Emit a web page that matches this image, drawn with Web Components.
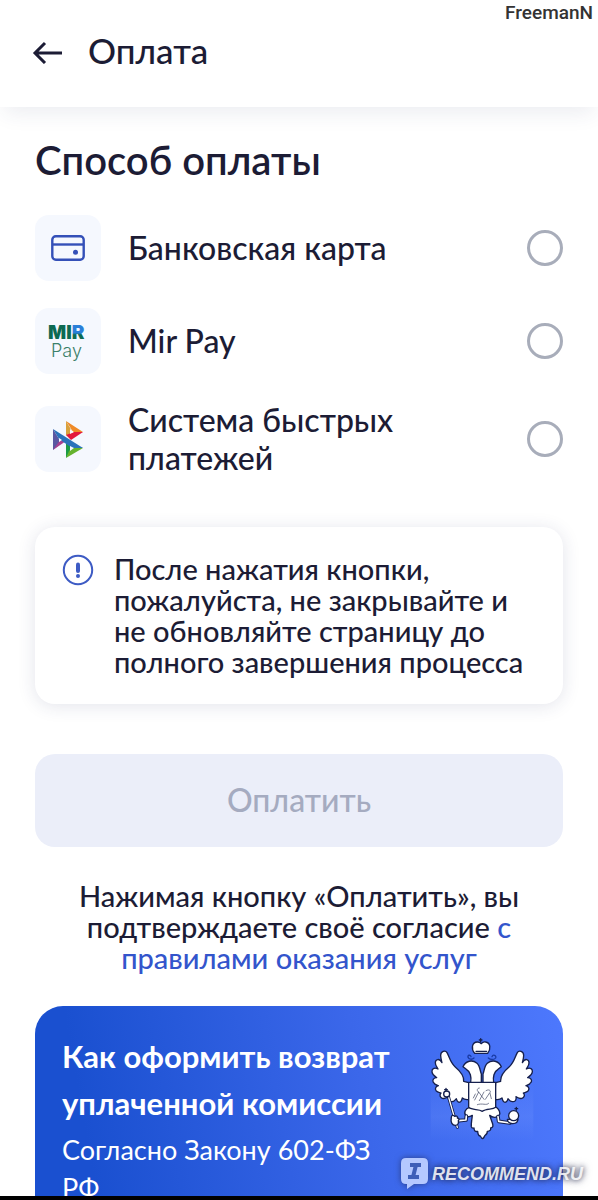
<!DOCTYPE html>
<html lang="ru">
<head>
<meta charset="utf-8">
<meta name="viewport" content="width=device-width, initial-scale=1">
<title>Оплата</title>
<style>
body {
    margin: 0;
    background-color: #fff;
    font-family: Lato, "Open Sans", sans-serif;
    font-weight: 500;
    color: #1c1c35;
    --accent: #3450b8;
    --tile: #f5f8fe;
    --muted: #a8adba;
}
</style>
</head>
<body>

<pay-screen>
    <screen-header slot="header">Оплата</screen-header>

    <payment-methods>
        <span slot="title">Способ оплаты</span>
        <payment-option value="card">
            <card-icon slot="icon"></card-icon>
            Банковская карта
        </payment-option>
        <payment-option value="mir">
            <mir-icon slot="icon"></mir-icon>
            Mir Pay
        </payment-option>
        <payment-option value="sbp">
            <sbp-icon slot="icon"></sbp-icon>
            Система быстрых платежей
        </payment-option>
    </payment-methods>

    <info-notice>После нажатия кнопки, пожалуйста, не закрывайте и не обновляйте страницу до полного завершения процесса</info-notice>

    <pay-form>Оплатить</pay-form>

    <refund-banner>
        <span slot="title">Как оформить возврат уплаченной комиссии</span>
        Согласно Закону 602-ФЗ РФ
    </refund-banner>

    <user-mark slot="overlay">FreemanN</user-mark>
    <site-mark slot="overlay">RECOMMEND.RU</site-mark>
</pay-screen>

<script>
function define(name, html, setup) {
    const template = document.createElement('template')
    template.innerHTML = html

    customElements.define(name, class extends HTMLElement {
        constructor() {
            super()
            const shadow = this.attachShadow({ mode: 'open' })
            shadow.appendChild(template.content.cloneNode(true))
            if (setup) setup(this, shadow)
        }
    })
}

define('pay-screen', `
<style>
:host {
    display: flex;
    flex-direction: column;
    position: relative;
    height: 100vh;
    overflow: hidden;
}

main {
    flex: 1;
    min-height: 0;
    overflow: hidden;
    padding: 29px 35px 0;
}

footer {
    flex: none;
    height: 4px;
    background-color: #000;
}
</style>

<slot name="header"></slot>
<main><slot></slot></main>
<footer></footer>
<slot name="overlay"></slot>`)

define('screen-header', `
<style>
:host {
    display: block;
    flex: none;
    position: relative;
    background-color: #fff;
    box-shadow: 0 10px 20px -4px rgba(40, 50, 100, .09);
}

header {
    display: flex;
    align-items: center;
    gap: 25px;
    padding: 29px 32px 36px;
}

button {
    display: flex;
    padding: 0;
    border: none;
    background: none;
    color: inherit;
    cursor: pointer;
}

h1 {
    margin: 0;
    font-size: 35px;
    line-height: 42px;
    font-weight: 500;
}
</style>

<header>
    <button type="button" aria-label="Назад">
        <svg width="31" height="28" viewBox="0 0 31 28" fill="none" stroke="currentColor" stroke-width="3">
            <path d="M30 17H3M13 7 3 17l10 10"/>
        </svg>
    </button>
    <h1><slot></slot></h1>
</header>`)

define('payment-methods', `
<style>
:host {
    display: block;
}

h2 {
    margin: 0 0 31px;
    font-size: 40px;
    line-height: 48px;
    font-weight: 600;
}

div {
    display: flex;
    flex-direction: column;
    gap: 27px;
}
</style>

<h2><slot name="title"></slot></h2>
<div role="radiogroup" aria-label="Способ оплаты"><slot></slot></div>`,
(host) => {
    // radios in separate shadow roots don't form a group on their own
    host.addEventListener('option-selected', (event) => {
        host.querySelectorAll('payment-option').forEach(el => {
            if (el !== event.target) el.shadowRoot.querySelector('input').checked = false
        })
    })
})

define('payment-option', `
<style>
:host {
    display: block;
}

label {
    display: flex;
    align-items: center;
    gap: 27px;
    font-size: 32px;
    line-height: 38px;
    cursor: pointer;
}

.icon {
    flex: none;
    display: flex;
    align-items: center;
    justify-content: center;
    width: 66px;
    height: 66px;
    border-radius: 14px;
    background-color: var(--tile);
}

.text {
    flex: 1;
}

input {
    appearance: none;
    flex: none;
    width: 36px;
    height: 36px;
    margin: 0;
    border: 3px solid var(--muted);
    border-radius: 50%;
    cursor: pointer;
}

input:checked {
    border: 10px solid var(--accent);
}
</style>

<label>
    <span class="icon"><slot name="icon"></slot></span>
    <span class="text"><slot></slot></span>
    <input type="radio">
</label>`,
(host, shadow) => {
    shadow.querySelector('input').addEventListener('change', () => {
        host.dispatchEvent(new CustomEvent('option-selected', { bubbles: true }))
    })
})

define('card-icon', `
<style>
:host {
    display: flex;
    color: var(--accent);
}
</style>

<svg width="34" height="26" viewBox="0 0 34 26" fill="none" stroke="currentColor" stroke-width="2.4">
    <rect x="1.3" y="1.3" width="31.4" height="23.4" rx="3.5"/>
    <path d="M1.3 9.5h31.4"/>
    <circle cx="24.5" cy="17.2" r="2.5" fill="currentColor" stroke="none"/>
</svg>`)

define('mir-icon', `
<style>
:host {
    display: flex;
}

text {
    font-family: Inter, sans-serif;
}
</style>

<svg width="42" height="40" viewBox="0 0 42 40">
    <defs>
        <linearGradient id="r" x1="0" y1="0" x2="0" y2="1">
            <stop offset=".52" stop-color="#2a7fd8"/>
            <stop offset=".6" stop-color="#0d6a52"/>
        </linearGradient>
    </defs>
    <text x="1" y="18" font-size="19" font-weight="900" fill="#0d6a52">MI<tspan fill="url(#r)">R</tspan></text>
    <text x="4" y="36" font-size="18" font-weight="300" fill="#3b8069">Pay</text>
</svg>`)

define('sbp-icon', `
<style>
:host {
    display: flex;
}
</style>

<svg width="32" height="38" viewBox="0 0 32 38">
    <path fill="#5b57a2" d="M1 9l6 10v6L1 30z"/>
    <path fill="#d9a13c" d="M14 1l6 10v8l-6-4z"/>
    <path fill="#ef8a27" d="M14 1l17 11-9 2-4-7z"/>
    <path fill="#e3183c" d="M31 12L19 20l-5-5 8-3z"/>
    <path fill="#a8418f" d="M1 30l13-9-5-2-3 4z"/>
    <path fill="#1b9b45" d="M14 38V20l4 3v9z"/>
    <path fill="#65b32e" d="M14 38l17-10-8-3-6 6z"/>
    <path fill="#2a72ba" d="M1 9l30 19H20L7 19z"/>
    <path fill="#f5f8fe" d="M7 18l3 2-3 2zM18 9l4 3-4 2zM18 26l4 2-4 3z"/>
</svg>`)

define('info-notice', `
<style>
:host {
    display: flex;
    gap: 20px;
    margin-top: 50px;
    padding: 27px;
    border-radius: 20px;
    background-color: #fff;
    box-shadow: 0 2px 18px rgba(40, 50, 100, .13);
}

svg {
    flex: none;
    color: #3d5bc4;
}

p {
    flex: 1;
    margin: -1px 0 0;
    font-size: 29px;
    line-height: 31px;
}
</style>

<svg width="32" height="32" viewBox="0 0 32 32" fill="none" stroke="currentColor">
    <circle cx="16" cy="16" r="14.2" stroke-width="2"/>
    <path d="M16 10.5v6.5" stroke-width="4" stroke-linecap="round"/>
    <circle cx="16" cy="22" r="2" fill="currentColor" stroke="none"/>
</svg>
<p><slot></slot></p>`)

define('pay-form', `
<style>
:host {
    display: block;
    margin: 50px 0 33px;
}

button {
    display: block;
    width: 100%;
    padding: 26px 27px 28px;
    border: none;
    border-radius: 20px;
    background-color: #ebeef9;
    color: #a5abc0;
    font: inherit;
    font-size: 32px;
    line-height: 39px;
}

p {
    margin: 33px 0 0;
    padding: 0 32px;
    font-size: 29px;
    line-height: 31px;
    text-align: center;
}

a {
    color: #3355cc;
    text-decoration: none;
}
</style>

<button type="button" disabled><slot></slot></button>
<p>Нажимая кнопку «Оплатить», вы подтверждаете своё согласие <a href="#rules">с правилами оказания услуг</a></p>`)

define('refund-banner', `
<style>
:host {
    display: flex;
    gap: 20px;
    padding: 27px 29px 27px 27px;
    border-radius: 28px;
    background: linear-gradient(80deg, #1a50d0 12%, #3b67ea 62%, #4d78fd);
    color: #fff;
}

div {
    flex: 1;
}

h2 {
    margin: 0;
    font-size: 31px;
    line-height: 47px;
    font-weight: 700;
}

p {
    margin: 4px 0 0;
    font-size: 27px;
    line-height: 38px;
    font-weight: 400;
}
</style>

<div>
    <h2><slot name="title"></slot></h2>
    <p><slot></slot></p>
</div>
<eagle-emblem></eagle-emblem>`)

define('eagle-emblem', `
<style>
:host {
    display: block;
    flex: none;
    padding-top: 5px;
}
</style>

<svg width="104" height="102" viewBox="90 114 312 306" fill="#fff" stroke="#16204d" stroke-width="4" stroke-linejoin="round" stroke-linecap="round">
    <defs>
        <linearGradient id="glow" x1="0" y1="0" x2="0" y2="1">
            <stop offset="0" stop-color="#7fa0ff" stop-opacity="0"/>
            <stop offset=".6" stop-color="#7fa0ff" stop-opacity=".18"/>
            <stop offset="1" stop-color="#7fa0ff" stop-opacity="0"/>
        </linearGradient>
        <path id="wing" d="M206 248l-15-4c2-20-14-34-26-44-14-12-17-30-24-42-5-9-19-4-19 8 0 8 2 14 4 22-8-15-20-10-20 0 0 9 5 13 8 19-12-6-19 0-18 9 1 9 8 13 14 17-9 0-14 7-10 14 3 7 9 8 15 10-9 3-11 10-6 16 5 5 10 4 14 6-6 6-2 14 4 16 8 2 13-2 18-5-2 10 3 16 11 15 6 0 9-4 13-9 2 9 7 12 12 10 4-2 5-7 6-12 5 5 12 6 23 4z"/>
        <path id="head" d="M244 248l-32 0c3-16-1-34-13-40l-10-8c8-18 28-22 42-10 9 8 9 22 13 32z"/>
    </defs>
    <rect x="92" y="244" width="308" height="176" fill="url(#glow)" stroke="none"/>
    <use href="#wing"/>
    <use href="#wing" transform="matrix(-1 0 0 1 493 0)"/>
    <use href="#head"/>
    <use href="#head" transform="matrix(-1 0 0 1 493 0)"/>
    <path d="M224 160c-11-12-9-34 8-34 6 0 10 3 12 5 3-4 8-6 13-5 15 2 16 22 6 34z"/>
    <path d="M242 116v10M238 120h8M228 154h32" fill="none"/>
    <path d="M222 174c-6 6-16 4-18-2-2-7 8-9 9-2M265 174c6 6 18 6 22 0 3-8-8-12-11-4" fill="none" stroke="#1a3ba5"/>
    <path d="M208 322c-12 3-18 18-10 25 6 7 14 2 19-1-2 18-4 24-3 34 1 6 6 4 8 4 0 8 4 12 11 10 1 12 4 14 8 14 2 4 4 8 7 8 4-2 5-7 7-10 6-2 7-6 7-12 8 0 11-4 10-10 8-1 7-7 6-12l-9-26c8 8 22 8 28 0 6-7 0-18-8-24z"/>
    <path d="M206 247h81v75c-10 8-28 2-40 12-12-8-30-2-41-12z"/>
    <path d="M238 264c-8 0-8 10-2 12l-12 24M236 276l16 22M252 276l-14 26M258 272c8-6 18 0 10 8l-12 18M270 280l4 16M226 282l-6 12M232 314c14-6 28 4 34-4" fill="none" stroke="#39415f" stroke-width="2"/>
    <path d="M199 348l-1 12-22 2M294 350l2 14 34 5" fill="none" stroke-width="11"/>
    <path d="M199 348l-1 12-22 2M294 350l2 14 34 5" fill="none" stroke="#fff" stroke-width="5"/>
    <path d="M146 292l26 90" fill="none" stroke-width="9"/>
    <path d="M146 292l26 90" fill="none" stroke="#fff" stroke-width="4"/>
    <circle cx="140" cy="282" r="9"/>
    <path d="M138 265v8M134 269h8" fill="none"/>
    <path d="M154 352c0-8 8-6 10-3 6-3 10 1 8 5 6 1 6 6 3 8 2 8-2 14-9 14-9 0-15-8-12-24z"/>
    <path d="M322 358c0 16 31 18 32 0z"/>
    <circle cx="341" cy="347" r="15"/>
    <path d="M349 322v9M345 326h8" fill="none"/>
</svg>`)

define('user-mark', `
<style>
:host {
    position: absolute;
    top: 2px;
    right: 5px;
    font-family: Roboto, sans-serif;
    font-size: 19px;
    line-height: 22px;
    color: #333;
}
</style>

<slot></slot>`)

define('site-mark', `
<style>
:host {
    position: absolute;
    right: 15px;
    bottom: 10px;
    display: flex;
    align-items: center;
    gap: 3px;
    font-family: "Liberation Sans", sans-serif;
    font-size: 18px;
    line-height: 24px;
    font-weight: 700;
    font-style: italic;
    color: rgba(255, 255, 255, .85);
    text-shadow: 0 0 5px rgba(30, 35, 70, .8), 0 0 8px rgba(30, 35, 70, .6);
}

svg {
    filter: drop-shadow(0 0 3px rgba(30, 35, 70, .6));
}
</style>

<svg width="29" height="33" viewBox="0 0 29 33">
    <path fill="#b5c8ff" d="M6 1h17q5 0 5 5v16q0 5-5 5H14l-7 5v-5H6q-5 0-5-5V6q0-5 5-5z"/>
    <path fill="none" stroke="#3f5fb8" stroke-width="4" d="M10 8h11M8 20h11M16 8l-3 12"/>
</svg>
<slot></slot>`)
</script>
</body>
</html>
